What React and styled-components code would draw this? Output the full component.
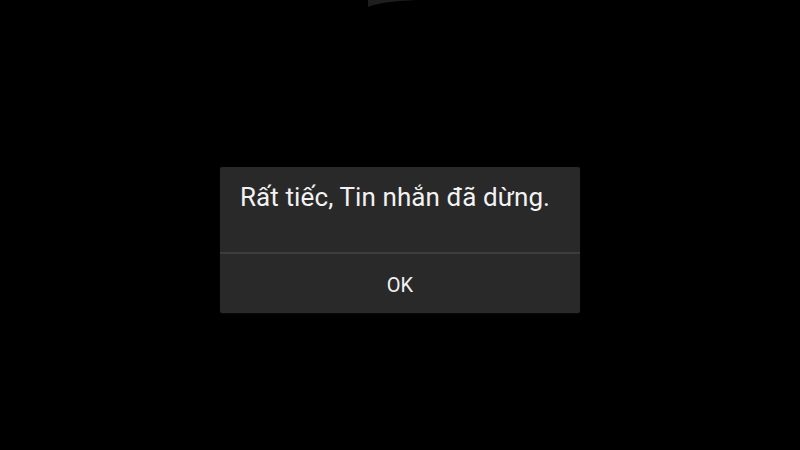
import React from 'react';
import styled, { createGlobalStyle } from 'styled-components';

const GlobalStyle = createGlobalStyle`
  html, body {
    margin: 0;
    padding: 0;
    background: #000;
  }
  body {
    font-family: Roboto, "Noto Sans", sans-serif;
  }
`;

const Screen = styled.div`
  position: relative;
  width: 800px;
  height: 450px;
  background: #000;
  display: flex;
  flex-direction: column;
  align-items: center;
  padding-top: 167px;
  box-sizing: border-box;
  overflow: hidden;
`;

const Glint = styled.svg`
  position: absolute;
  top: 0;
  left: 360px;
`;

const Dialog = styled.div`
  width: 360px;
  background: #292929;
  border-radius: 2px;
  display: flex;
  flex-direction: column;
  box-shadow: 0 1px 2px rgba(255, 255, 255, 0.04);
`;

const Message = styled.div`
  height: 85px;
  box-sizing: border-box;
  padding: 13px 0 0 20px;
  color: #f2f2f2;
  font-size: 26px;
  line-height: 34px;
  letter-spacing: 0.1px;
`;

const Divider = styled.div`
  height: 2px;
  background: #3d3d3d;
`;

const OkButton = styled.button`
  height: 59px;
  border: none;
  background: transparent;
  color: #f2f2f2;
  font-family: Roboto, "Noto Sans", sans-serif;
  font-size: 20px;
  padding: 3px 0 0;
  cursor: pointer;
`;

export default function App() {
  return (
    <>
      <GlobalStyle />
      <Screen>
        <Glint width="60" height="8" viewBox="0 0 60 8">
          <path d="M8 7 C20 2 40 1 55 0 L8 0 Z" fill="#1e1e1e" />
        </Glint>
        <Dialog>
          <Message>Rất tiếc, Tin nhắn đã dừng.</Message>
          <Divider />
          <OkButton>OK</OkButton>
        </Dialog>
      </Screen>
    </>
  );
}
